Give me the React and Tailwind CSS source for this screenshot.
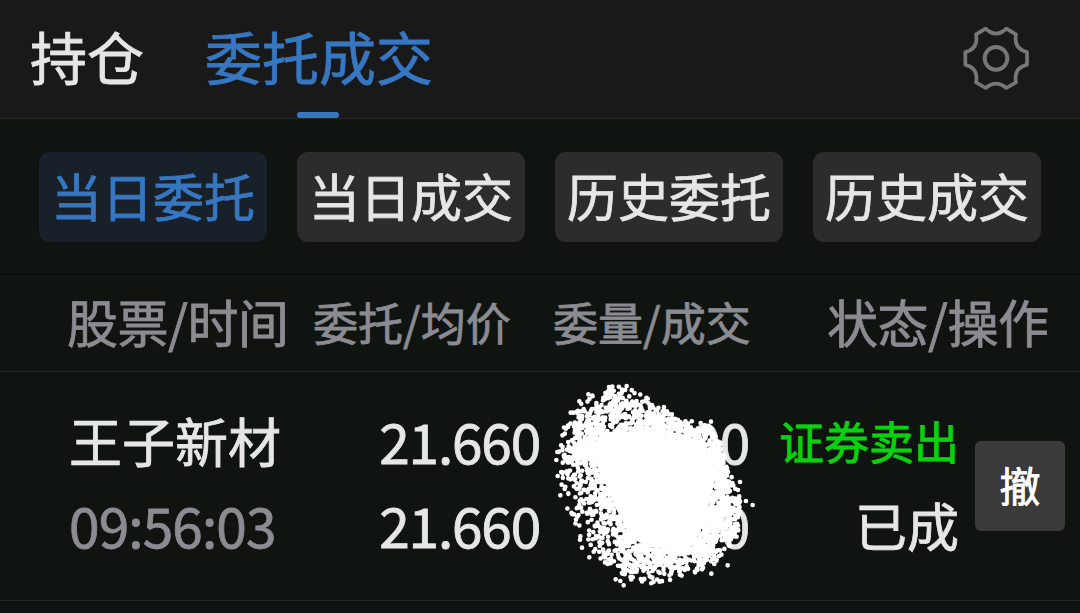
const filters = ["当日委托", "当日成交", "历史委托", "历史成交"];

// [inner x, inner y, outer x, outer y] around the scribble
const ring = [
  [185, 185, 205, 52],
  [260, 185, 262, 48],
  [320, 165, 375, 108],
  [390, 205, 440, 150],
  [450, 215, 510, 162],
  [510, 250, 540, 215],
  [530, 310, 580, 320],
  [515, 370, 605, 395],
  [500, 430, 600, 440],
  [480, 490, 598, 490],
  [430, 525, 550, 570],
  [370, 535, 455, 615],
  [320, 530, 350, 645],
  [270, 500, 260, 630],
  [245, 450, 190, 580],
  [220, 400, 120, 505],
  [200, 350, 72, 405],
  [175, 300, 52, 270],
  [160, 250, 60, 195],
  [165, 215, 100, 105],
];

// single specks outside of the cloud
const strays = [
  [638, 405],
  [618, 393],
  [600, 336],
  [594, 360],
  [597, 383],
  [513, 155],
  [563, 586],
  [514, 611],
  [251, 646],
  [227, 628],
  [241, 633],
  [148, 562],
  [126, 533],
  [120, 509],
  [112, 440],
  [49, 270],
  [52, 246],
  [53, 318],
  [61, 376],
  [92, 128],
  [118, 94],
  [145, 73],
  [157, 77],
  [260, 48],
  [207, 51],
  [217, 50],
];

const makeDots = () => {
  let seed = 4127;
  const rand = () => {
    seed = (seed * 16807) % 2147483647;
    return seed / 2147483647;
  };
  const dots = [...strays];
  for (let i = 0; i < 2100; i++) {
    const pos = rand() * ring.length;
    const a = ring[Math.floor(pos)];
    const b = ring[(Math.floor(pos) + 1) % ring.length];
    const f = pos % 1;
    const t = 1 - Math.pow(1 - rand(), 0.72);
    const p = a.map((v, k) => v + (b[k] - v) * f);
    dots.push([p[0] + (p[2] - p[0]) * t, p[1] + (p[3] - p[1]) * t]);
  }
  return dots
    .map(([x, y]) => `M${(x - 7).toFixed(1)} ${y.toFixed(1)}a7 7 0 1 0 14 0a7 7 0 1 0 -14 0`)
    .join("");
};

const dotPath = makeDots();
const corePath = "M" + ring.map((p) => `${p[0]} ${p[1]}`).join("L") + "Z";

const GearIcon = () => (
  <svg className="h-[100px] w-[120px]" viewBox="0 0 360 300" fill="none" stroke="#777777" strokeWidth="11" strokeLinejoin="round">
    <path d="M137 56Q168 86 199 56L228 73Q220 116 261 126V164Q220 174 228 217L199 234Q168 208 137 234L108 217Q116 174 76 164V126Q116 116 108 73Z" />
    <circle cx="168" cy="145" r="34" strokeWidth="12" />
  </svg>
);

const Scribble = () => (
  <svg className="absolute -top-[2px] left-0 h-[230px] w-[230px]" viewBox="0 0 690 690" fill="#ffffff">
    <path d={corePath} />
    <path d={dotPath} />
  </svg>
);

const App = () => {
  return (
    <div className="h-[613px] w-[1080px] overflow-hidden whitespace-nowrap bg-[#101411] font-['Noto_Sans_CJK_SC',sans-serif] text-[#e6e6e6] [-webkit-text-stroke:0.8px]">
      {/* Tabs */}
      <div className="flex h-[119px] items-start justify-between border-b border-[#252a27] bg-[#191919] pl-[30px] pr-5">
        <div className="flex gap-[61px] text-[57px] leading-[111px]">
          <span>持仓</span>
          <div className="relative h-[118px] text-[#3777c2]">
            委托成交
            <span className="absolute bottom-0 left-[92px] h-[6px] w-[42px] rounded-full bg-[#3777c2]" />
          </div>
        </div>
        <div className="pt-[10px]">
          <GearIcon />
        </div>
      </div>

      {/* Filters */}
      <div className="flex h-[156px] gap-[30px] border-b border-[#050806] px-[39px] pt-[33px]">
        {filters.map((name, i) => (
          <button
            key={name}
            className={`h-[90px] w-[228px] rounded-[11px] pb-[4px] text-[51px] leading-[86px] ${
              i === 0 ? "bg-[#18202a] text-[#3777c2]" : "bg-[#2b2c2b]"
            }`}
          >
            {name}
          </button>
        ))}
      </div>

      {/* Table header */}
      <div className="flex h-[97px] border-b border-[#252a27] pl-[67px] text-[#8b8b92] leading-[93px]">
        <span className="w-[246px] text-[51px] tracking-[-0.5px]">股票/时间</span>
        <span className="w-[240px] text-[45px]">委托/均价</span>
        <span className="w-[274px] text-[45px]">委量/成交</span>
        <span className="text-[51px] tracking-[-0.5px]">状态/操作</span>
      </div>

      {/* Order row */}
      <div className="flex h-[229px] border-b border-[#252a27] pl-[69px] pt-[26px] text-[55px] leading-[84px]">
        <div className="w-[260px]">
          <div className="text-[53px]">王子新材</div>
          <div className="tracking-[-0.9px] text-[#8b8b92]">09:56:03</div>
        </div>
        <div className="w-[211px] text-right tracking-[-1.2px]">
          <div>21.660</div>
          <div>21.660</div>
        </div>
        <div className="relative -mt-[26px] w-[209px] pt-[26px] text-right tracking-[-1.2px]">
          <div>00</div>
          <div>00</div>
          <Scribble />
        </div>
        <div className="w-[210px] text-right">
          <div className="text-[45px] leading-[86px] text-[#0bd20f]">证券卖出</div>
          <div className="text-[52px] leading-[82px]">已成</div>
        </div>
        <button className="ml-4 mt-[43px] h-[90px] w-[90px] rounded-[6px] bg-[#3a3a3a] pb-[4px] text-[41px] leading-[86px] text-white">撤</button>
      </div>
    </div>
  );
};

export default App;
